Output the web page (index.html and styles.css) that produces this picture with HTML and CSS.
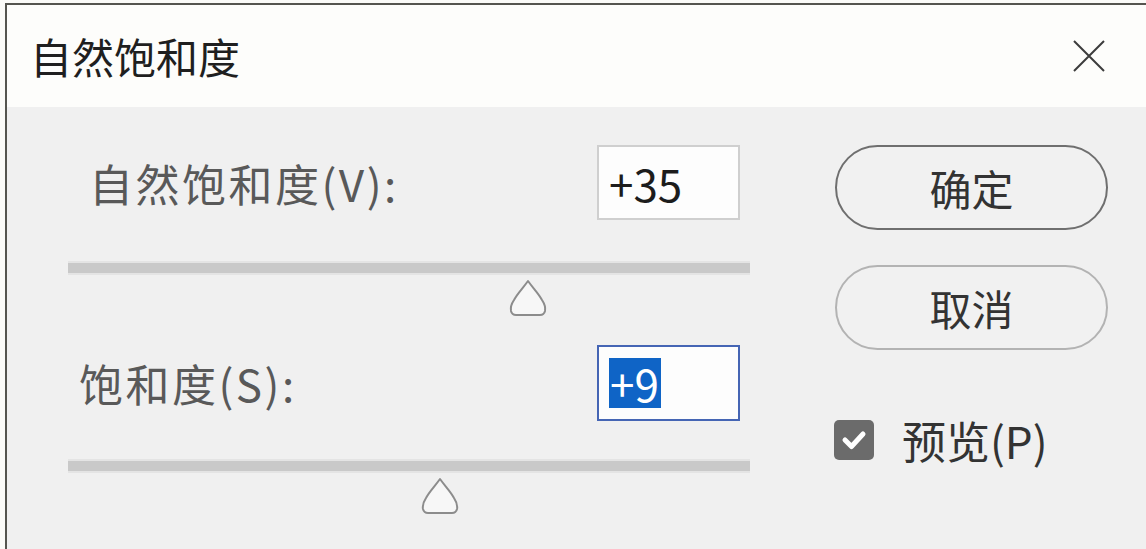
FILE: index.html
```html
<!DOCTYPE html>
<html lang="zh-CN">
<head>
<meta charset="utf-8">
<title>自然饱和度</title>
<link rel="stylesheet" href="styles.css">
</head>
<body>
<div class="window">
  <header class="titlebar">
    <h1 class="title">自然饱和度</h1>
    <svg class="close" viewBox="0 0 32 32" aria-label="关闭">
      <path d="M1 1 L31 31 M31 1 L1 31" stroke="#3c3c3c" stroke-width="2" fill="none"/>
    </svg>
  </header>
  <main class="content">
    <section class="controls">
      <div class="field field-v">
        <span class="label">自然饱和度(V):</span>
        <div class="input">+35</div>
      </div>
      <div class="slider">
        <span class="thumb" style="left:67.5%">
          <svg viewBox="0 0 44 38" width="44" height="38"><path d="M22 2 C17 9 11 15 8 21 Q4 27 5 32 Q6 36 10 36 L34 36 Q38 36 39 32 Q40 27 36 21 C33 15 27 9 22 2 Z" fill="#f7f7f7" stroke="#8c8c8c" stroke-width="2" stroke-linejoin="round"/></svg>
        </span>
      </div>
      <div class="field field-s">
        <span class="label">饱和度(S):</span>
        <div class="input input-active"><span class="sel">+9</span></div>
      </div>
      <div class="slider slider-s">
        <span class="thumb" style="left:54.5%">
          <svg viewBox="0 0 44 38" width="44" height="38"><path d="M22 2 C17 9 11 15 8 21 Q4 27 5 32 Q6 36 10 36 L34 36 Q38 36 39 32 Q40 27 36 21 C33 15 27 9 22 2 Z" fill="#f7f7f7" stroke="#8c8c8c" stroke-width="2" stroke-linejoin="round"/></svg>
        </span>
      </div>
    </section>
    <aside class="actions">
      <button class="btn btn-default" type="button">确定</button>
      <button class="btn btn-cancel" type="button">取消</button>
      <label class="check">
        <span class="box">
          <svg viewBox="0 0 40 40" width="40" height="40"><path d="M11 20 L17.5 26.5 L29 14" stroke="#ffffff" stroke-width="5" fill="none" stroke-linecap="round" stroke-linejoin="round"/></svg>
        </span>
        预览(P)
      </label>
    </aside>
  </main>
</div>
</body>
</html>
```

FILE: styles.css
```css
html, body {
  margin: 0;
  padding: 0;
  height: 100%;
}

body {
  background: #fbfbf8;
  font-family: "Noto Sans CJK SC", "Noto Sans", sans-serif;
  overflow: hidden;
}

.window {
  box-sizing: border-box;
  margin: 3px 0 0 5px;
  height: 546px;
  border-top: 2px solid #55554f;
  border-left: 2px solid #55554f;
  display: flex;
  flex-direction: column;
}

.titlebar {
  box-sizing: border-box;
  height: 102px;
  flex: 0 0 102px;
  background: #fdfdfb;
  display: flex;
  align-items: center;
  justify-content: space-between;
  padding: 0 41px 0 23px;
}

.title {
  margin: 0;
  font-size: 42px;
  font-weight: 400;
  line-height: 1;
  color: #1f1f1f;
}

.close {
  width: 32px;
  height: 32px;
  display: block;
}

.content {
  flex: 1;
  background: #f0f0f0;
  display: flex;
  padding-left: 61px;
}

.controls {
  width: 682px;
  display: flex;
  flex-direction: column;
}

.field {
  display: flex;
  align-items: center;
  justify-content: space-between;
  height: 76px;
  padding-right: 10px;
}

.field-v {
  margin-top: 38px;
  height: 75px;
  padding-left: 21px;
}

.field-s {
  margin-top: 72px;
  padding-left: 11px;
}

.label {
  font-size: 44px;
  line-height: 1;
  color: #595959;
  letter-spacing: 2.5px;
}

.input {
  box-sizing: border-box;
  width: 143px;
  height: 75px;
  border: 2px solid #cfcfcf;
  background: #fdfdfd;
  font-size: 44px;
  line-height: 1;
  color: #1c1c1c;
  padding-left: 10px;
  display: flex;
  align-items: center;
}

.input-active {
  height: 76px;
  border-color: #4565b4;
}

.sel {
  display: inline-block;
  background: #0f64c6;
  color: #ffffff;
  line-height: 50px;
  padding: 0 2px 0 1px;
}

.slider {
  position: relative;
  height: 10px;
  margin-top: 43px;
  background: #c9c9c9;
  box-shadow: 0 -2px 0 #e4e4e4, 0 2px 0 #e4e4e4;
}

.slider-s {
  margin-top: 40px;
}

.thumb {
  position: absolute;
  top: 16px;
  width: 44px;
  height: 38px;
  transform: translateX(-50%);
}

.thumb svg {
  display: block;
}

.actions {
  margin-left: 85px;
  width: 273px;
  display: flex;
  flex-direction: column;
}

.btn {
  box-sizing: border-box;
  height: 85px;
  margin: 38px 0 0 0;
  padding: 0;
  border-radius: 43px;
  border: 2px solid #b3b3b3;
  background: #f1f1f1;
  font-family: "Noto Sans CJK SC", "Noto Sans", sans-serif;
  font-size: 42px;
  line-height: 1;
  color: #333333;
}

.btn-default {
  border-color: #6f6f6f;
}

.btn-cancel {
  margin-top: 35px;
}

.check {
  margin-top: 67px;
  height: 46px;
  display: flex;
  align-items: center;
  font-size: 44px;
  line-height: 1;
  color: #333333;
}

.box {
  width: 40px;
  height: 40px;
  margin-left: -1px;
  margin-right: 28px;
  border-radius: 5px;
  background: #6b6b6b;
  display: block;
}

.box svg {
  display: block;
}
```
